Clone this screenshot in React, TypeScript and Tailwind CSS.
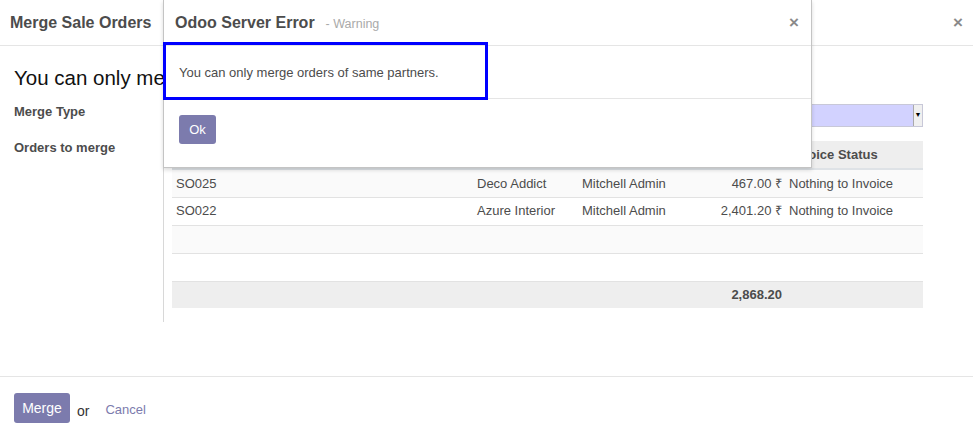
import React from "react";

const orders = [
    { ref: "SO025", customer: "Deco Addict", salesperson: "Mitchell Admin", total: "467.00 ₹", status: "Nothing to Invoice" },
    { ref: "SO022", customer: "Azure Interior", salesperson: "Mitchell Admin", total: "2,401.20 ₹", status: "Nothing to Invoice" },
];

function CloseX() {
    return <span className="text-[17px] font-bold leading-none text-[#8a8a8a]">×</span>;
}

function OrdersTable() {
    return (
        <table className="w-[751px] table-fixed border-collapse text-[13px] text-[#4c4c4c]">
            <colgroup>
                <col className="w-[136px]" />
                <col className="w-[165px]" />
                <col className="w-[105px]" />
                <col className="w-[122px]" />
                <col className="w-[86px]" />
                <col />
            </colgroup>
            <thead>
                <tr className="h-[28px] bg-[#eeeeee] border-b-2 border-[#dee2e6]">
                    <th className="px-[4px] text-left font-bold border-r border-[#e0e0e0]">Order Reference</th>
                    <th className="px-[4px] text-left font-bold border-r border-[#e0e0e0]">Order Date</th>
                    <th className="px-[4px] text-left font-bold border-r border-[#e0e0e0]">Customer</th>
                    <th className="px-[4px] text-left font-bold border-r border-[#e0e0e0]">Salesperson</th>
                    <th className="px-[4px] text-right font-bold border-r border-[#e0e0e0]">Total</th>
                    <th className="pl-[3px] text-left font-bold">Invoice Status</th>
                </tr>
            </thead>
            <tbody>
                {orders.map((o, i) => (
                    <tr key={o.ref} className={`h-[28px] border-b border-[#e2e2e2] ${i % 2 === 0 ? "bg-[#fafafa]" : "bg-white"}`}>
                        <td className="px-[4px]">{o.ref}</td>
                        <td className="px-[4px]"></td>
                        <td className="px-[4px]">{o.customer}</td>
                        <td className="px-[4px]">{o.salesperson}</td>
                        <td className="pl-[4px] pr-[4px] text-right whitespace-nowrap">{o.total}</td>
                        <td className="pl-[3px] whitespace-nowrap">{o.status}</td>
                    </tr>
                ))}
                <tr className="h-[28px] border-b border-[#e2e2e2] bg-[#fafafa]">
                    <td colSpan={6}></td>
                </tr>
                <tr className="h-[28px] bg-white">
                    <td colSpan={6}></td>
                </tr>
            </tbody>
            <tfoot>
                <tr className="h-[27px] bg-[#eeeeee] border-t border-[#e2e2e2]">
                    <td></td>
                    <td></td>
                    <td></td>
                    <td></td>
                    <td className="px-[4px] text-right font-bold">2,868.20</td>
                    <td></td>
                </tr>
            </tfoot>
        </table>
    );
}

export default function App() {
    return (
        <div
            className="relative w-[973px] h-[441px] overflow-hidden bg-white text-[#4c4c4c]"
            style={{ fontFamily: '"Liberation Sans", Arial, sans-serif' }}
        >
            <div className="flex h-full flex-col">
                {/* header */}
                <div className="flex h-[46px] shrink-0 items-center justify-between border-b border-[#e5e5e5] pl-[10px] pr-[10px]">
                    <h4 className="text-[16px] font-bold">Merge Sale Orders</h4>
                    <CloseX />
                </div>

                {/* body */}
                <div className="flex-1 pt-[18px]">
                    <div className="pl-[14px] text-[20.5px] leading-[28px] text-[#111]">You can only merge orders of same partners.</div>
                    <div className="mt-[8px] grid grid-cols-[163px_1fr] text-[13px]">
                        <div className="flex flex-col pl-[14px] pt-[5px] font-bold">
                            <div className="leading-[14px]">Merge Type</div>
                            <div className="mt-[22px] leading-[14px]">Orders to merge</div>
                        </div>
                        <div className="border-l border-[#d8d8d8] pb-[14px] pl-[8px] pt-[4px]">
                            <div className="flex h-[23px] w-[751px] items-center justify-end border border-[#c8c8d8] bg-[#d2d2ff]">
                                <div className="flex h-[21px] w-[9px] items-center justify-center border-l border-[#aaa] bg-[#f0f0f0] text-[7px] text-black">▼</div>
                            </div>
                            <div className="mt-[14px]">
                                <OrdersTable />
                            </div>
                        </div>
                    </div>
                </div>

                {/* footer */}
                <div className="flex h-[65px] shrink-0 items-start gap-[7px] border-t border-[#e5e5e5] pl-[14px] pt-[16px] text-[13px]">
                    <button type="button" className="h-[30px] w-[56px] rounded-[3px] bg-[#7c7bad] text-[14px] text-white">
                        Merge
                    </button>
                    <span className="mt-[8px] text-[14px] text-[#333]">or</span>
                    <span className="ml-[9px] mt-[7px] text-[13px] text-[#7c7bad]">Cancel</span>
                </div>
            </div>

            {/* error dialog */}
            <div className="absolute left-[163px] top-0 h-[168px] w-[649px] border-x border-b border-[#c4c4c4] bg-white shadow-[0_2px_4px_rgba(0,0,0,0.15)]">
                <div className="flex h-[46px] items-center justify-between border-b border-[#e5e5e5] pl-[11px] pr-[12px]">
                    <div className="flex items-baseline">
                        <span className="text-[16px] font-bold">Odoo Server Error</span>
                        <span className="ml-[11px] text-[12.5px] text-[#aaaaaa]">- Warning</span>
                    </div>
                    <CloseX />
                </div>
                <div className="flex h-[53px] items-center border-b border-[#e5e5e5] pl-[15px] pt-[2px] text-[13px] text-[#4c4c4c]">
                    You can only merge orders of same partners.
                </div>
                <div className="pl-[15px] pt-[16px]">
                    <button type="button" className="h-[29px] w-[37px] rounded-[3px] bg-[#7c7bad] text-[13px] text-white">
                        Ok
                    </button>
                </div>
                <div className="absolute left-[-1px] top-[42px] h-[58px] w-[325px] border-[3px] border-[#0000ff]"></div>
            </div>
        </div>
    );
}
